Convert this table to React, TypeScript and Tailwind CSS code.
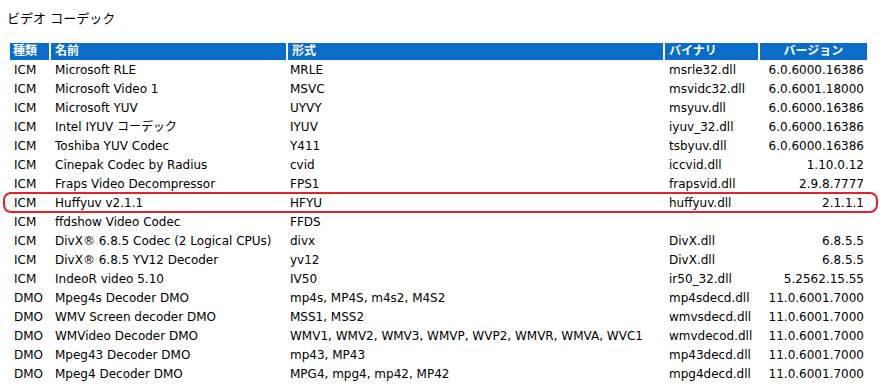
import React from "react";

const rows: [string, string, string, string, string][] = [
  ["ICM", "Microsoft RLE", "MRLE", "msrle32.dll", "6.0.6000.16386"],
  ["ICM", "Microsoft Video 1", "MSVC", "msvidc32.dll", "6.0.6001.18000"],
  ["ICM", "Microsoft YUV", "UYVY", "msyuv.dll", "6.0.6000.16386"],
  ["ICM", "Intel IYUV コーデック", "IYUV", "iyuv_32.dll", "6.0.6000.16386"],
  ["ICM", "Toshiba YUV Codec", "Y411", "tsbyuv.dll", "6.0.6000.16386"],
  ["ICM", "Cinepak Codec by Radius", "cvid", "iccvid.dll", "1.10.0.12"],
  ["ICM", "Fraps Video Decompressor", "FPS1", "frapsvid.dll", "2.9.8.7777"],
  ["ICM", "Huffyuv v2.1.1", "HFYU", "huffyuv.dll", "2.1.1.1"],
  ["ICM", "ffdshow Video Codec", "FFDS", "", ""],
  ["ICM", "DivX® 6.8.5 Codec (2 Logical CPUs)", "divx", "DivX.dll", "6.8.5.5"],
  ["ICM", "DivX® 6.8.5 YV12 Decoder", "yv12", "DivX.dll", "6.8.5.5"],
  ["ICM", "IndeoR video 5.10", "IV50", "ir50_32.dll", "5.2562.15.55"],
  ["DMO", "Mpeg4s Decoder DMO", "mp4s, MP4S, m4s2, M4S2", "mp4sdecd.dll", "11.0.6001.7000"],
  ["DMO", "WMV Screen decoder DMO", "MSS1, MSS2", "wmvsdecd.dll", "11.0.6001.7000"],
  ["DMO", "WMVideo Decoder DMO", "WMV1, WMV2, WMV3, WMVP, WVP2, WMVR, WMVA, WVC1", "wmvdecod.dll", "11.0.6001.7000"],
  ["DMO", "Mpeg43 Decoder DMO", "mp43, MP43", "mp43decd.dll", "11.0.6001.7000"],
  ["DMO", "Mpeg4 Decoder DMO", "MPG4, mpg4, mp42, MP42", "mpg4decd.dll", "11.0.6001.7000"],
];

export default function App() {
  return (
    <div
      className="relative w-[885px] h-[391px] bg-white text-black overflow-hidden"
      style={{ fontFamily: '"DejaVu Sans", "Noto Sans CJK JP", sans-serif' }}
    >
      <div className="pl-[7px] pt-[10px] h-[41px] text-[13px] leading-[17px]">ビデオ コーデック</div>
      <table className="ml-[8px] border-separate border-spacing-[2px] table-fixed w-[861px] text-[12px] leading-[17px]">
        <colgroup>
          <col className="w-[39px]" />
          <col className="w-[235px]" />
          <col className="w-[375px]" />
          <col className="w-[93px]" />
          <col className="w-[107px]" />
        </colgroup>
        <thead>
          <tr className="bg-[#0b6dca] text-white font-bold h-[17px]">
            <th className="text-left px-[3px] py-0 font-bold">種類</th>
            <th className="text-left px-[4px] py-0 font-bold">名前</th>
            <th className="text-left px-[4px] py-0 font-bold">形式</th>
            <th className="text-left px-[4px] py-0 font-bold">バイナリ</th>
            <th className="text-center px-[4px] py-0 font-bold">バージョン</th>
          </tr>
        </thead>
        <tbody>
          {rows.map((r, i) => (
            <tr key={i} className="h-[17px]">
              <td className="px-[4px] py-0 whitespace-nowrap">{r[0]}</td>
              <td className="px-[4px] py-0 whitespace-nowrap">{r[1]}</td>
              <td className="px-[2px] py-0 whitespace-nowrap">{r[2]}</td>
              <td className="px-[4px] py-0 whitespace-nowrap">{r[3]}</td>
              <td className="px-[3px] py-0 whitespace-nowrap text-right">{r[4]}</td>
            </tr>
          ))}
        </tbody>
      </table>
      <div className="absolute left-[3px] top-[192px] w-[875px] h-[21px] border-2 border-[#e3212b] rounded-[8px]" />
    </div>
  );
}
